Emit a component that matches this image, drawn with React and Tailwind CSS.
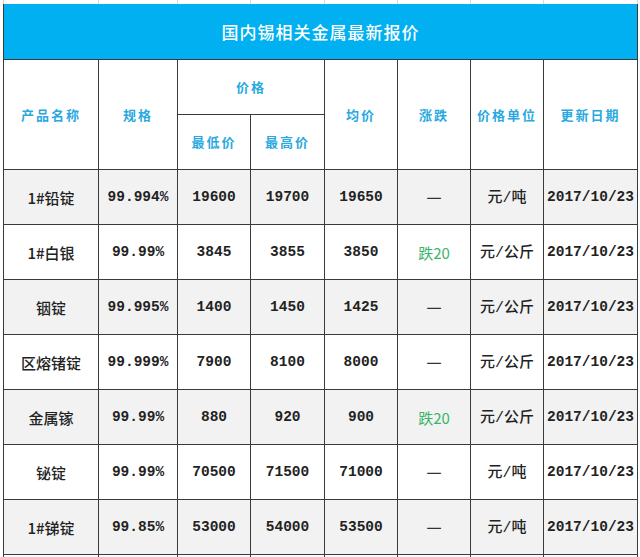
const rows = [
  ["1#铅锭", "99.994%", "19600", "19700", "19650", "—", "元/吨", "2017/10/23"],
  ["1#白银", "99.99%", "3845", "3855", "3850", "跌20", "元/公斤", "2017/10/23"],
  ["铟锭", "99.995%", "1400", "1450", "1425", "—", "元/公斤", "2017/10/23"],
  ["区熔锗锭", "99.999%", "7900", "8100", "8000", "—", "元/公斤", "2017/10/23"],
  ["金属镓", "99.99%", "880", "920", "900", "跌20", "元/公斤", "2017/10/23"],
  ["铋锭", "99.99%", "70500", "71500", "71000", "—", "元/吨", "2017/10/23"],
  ["1#锑锭", "99.85%", "53000", "54000", "53500", "—", "元/吨", "2017/10/23"],
];

const cols = "grid-cols-[95px_79px_73px_74px_73px_73px_73px_94px]";
const cjk = { fontFamily: '"Noto Sans CJK SC", "Noto Sans", sans-serif' };
const mono = { fontFamily: '"Liberation Mono", "Noto Sans CJK SC", monospace' };

function Cell({ children, className = "" }) {
  return (
    <div className={`flex items-center justify-center border-r border-b border-[#3a3a3a] ${className}`}>
      {children}
    </div>
  );
}

function HeadCell({ children, className = "" }) {
  return (
    <Cell className={`text-[13px] font-bold tracking-[2px] text-[#29a9e0] ${className}`}>
      <span style={cjk}>{children}</span>
    </Cell>
  );
}

function Value({ text }) {
  // digits look like SimSun half-width, so mono for those
  const isNum = /^[0-9.%/]+$/.test(text);
  if (text.startsWith("跌")) {
    return (
      <span className="pt-[2px] text-[15px] text-[#3bb56a]" style={cjk}>
        {text}
      </span>
    );
  }
  if (text === "—") {
    return <span className="pt-[2px] text-[15px] text-[#333]" style={cjk}>一</span>;
  }
  if (text.includes("元/")) {
    const [a, b] = text.split("/");
    return (
      <span className="pt-[2px] text-[15px] font-medium text-[#222]" style={cjk}>
        {a}
        <span style={mono} className="font-normal">/</span>
        {b}
      </span>
    );
  }
  return (
    <span
      className={isNum ? "pt-[2px] text-[14.5px] font-bold text-[#222]" : "pt-[2px] text-[15px] font-medium text-[#222]"}
      style={isNum ? mono : cjk}
    >
      {text}
    </span>
  );
}

export default function App() {
  return (
    <div className="h-[557px] w-[640px] overflow-hidden bg-white pl-[3px]">
      {/* spreadsheet gridlines above the table */}
      <div className={`grid h-[4px] w-[635px] ${cols} border-l border-[#d9d9d9]`}>
        {Array.from({ length: 8 }).map((_, j) => (
          <div key={j} className="border-r border-[#d9d9d9]" />
        ))}
      </div>
      <div className={`grid w-[635px] ${cols} border-l border-[#3a3a3a]`}>
        <div className="col-span-8 flex h-[56px] items-center justify-center border-b border-r border-[#3a3a3a] bg-[#00b0f0]">
          <span className="text-[17px] font-medium tracking-[1px] text-white" style={cjk}>
            国内锡相关金属最新报价
          </span>
        </div>

        <HeadCell className="row-span-2">产品名称</HeadCell>
        <HeadCell className="row-span-2">规格</HeadCell>
        <HeadCell className="col-span-2 h-[55px]">价格</HeadCell>
        <HeadCell className="row-span-2">均价</HeadCell>
        <HeadCell className="row-span-2">涨跌</HeadCell>
        <HeadCell className="row-span-2">价格单位</HeadCell>
        <HeadCell className="row-span-2">更新日期</HeadCell>
        <HeadCell className="h-[55px]">最低价</HeadCell>
        <HeadCell className="h-[55px]">最高价</HeadCell>

        {rows.map((r, i) => (
          r.map((v, j) => (
            <Cell key={`${i}-${j}`} className={`h-[55px] ${i % 2 === 0 ? "bg-[#f2f2f2]" : "bg-white"}`}>
              <Value text={v} />
            </Cell>
          ))
        ))}

        {Array.from({ length: 8 }).map((_, j) => (
          <Cell key={`e-${j}`} className="h-[55px] bg-white" />
        ))}
      </div>
    </div>
  );
}
